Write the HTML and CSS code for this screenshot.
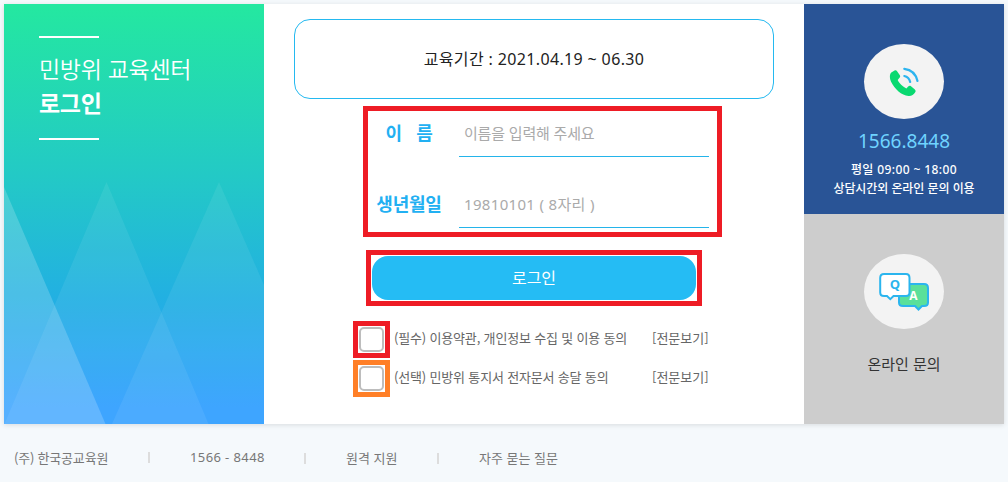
FILE: index.html
```html
<!DOCTYPE html>
<html lang="ko">
<head>
  <meta charset="UTF-8" />
  <meta name="viewport" content="width=device-width, initial-scale=1.0"/>
  <title>민방위 교육센터</title>
  <link rel="stylesheet" href="styles.css">
</head>
<body>

<div class="login-card">

  <!-- Left title -->
  <div class="visual">
    <svg class="peaks" width="260" height="420" viewBox="0 0 260 420">
      <polygon points="0,183 101.5,420 0,420" fill="#fff" fill-opacity="0.19"/>
      <polygon points="102.5,178 204.5,420 0.5,420" fill="#fff" fill-opacity="0.07"/>
      <polygon points="215,178 260,281 260,420 108,420" fill="#fff" fill-opacity="0.07"/>
    </svg>
    <div class="visual-title">
      <p>민방위 교육센터</p>
      <p class="strong">로그인</p>
    </div>
  </div>

  <!-- Login form -->
  <div class="login">
    <div class="period">교육기간 : 2021.04.19 ~ 06.30</div>

    <div class="fields">
      <div class="field">
        <label for="name">이 &nbsp;&nbsp;름</label>
        <input type="text" id="name" placeholder="이름을 입력해 주세요" />
      </div>
      <div class="field">
        <label for="birth">생년월일</label>
        <input class="birth" type="text" id="birth" placeholder="19810101 ( 8자리 )" />
      </div>
    </div>

    <div class="btn-wrap">
      <button class="btn">로그인</button>
    </div>

    <div class="agree">
      <div class="check required"><input type="checkbox" id="agree1" /></div>
      <label for="agree1">(필수) 이용약관, 개인정보 수집 및 이용 동의</label>
      <a>[전문보기]</a>
    </div>
    <div class="agree">
      <div class="check optional"><input type="checkbox" id="agree2" /></div>
      <label for="agree2">(선택) 민방위 통지서 전자문서 송달 동의</label>
      <a>[전문보기]</a>
    </div>
  </div>

  <!-- Contact -->
  <div class="side">
    <div class="call">
      <div class="circle">
        <svg width="80" height="75" viewBox="0 0 80 75">
          <path d="M31 26.3 L27.3 28.6 C25.4 30.4 25.5 34.5 27.2 38 C30.6 45 37.5 51.4 44.5 52 C47.5 52.2 49.5 51 51.4 48 C51.9 47 51.5 46 50.6 45.2 L47 42.2 C46 41.4 45 41.6 44.2 42.6 L42.4 44.4 C39.5 43.4 35 39 33.7 36 L35.7 33.6 C36.4 32.7 36.3 31.8 35.7 30.9 L32.9 27.1 C32.4 26.3 31.7 26 31 26.3Z" fill="#09d970"/>
          <path d="M40.3 24.8 Q51 26 53.5 37 M40.3 32 Q45 33 46.2 38" fill="none" stroke="#2cb4ef" stroke-width="2.2" stroke-linecap="round"/>
        </svg>
      </div>
      <p class="tel">1566.8448</p>
      <p class="hours">평일 09:00 ~ 18:00</p>
      <p class="hours-note">상담시간외 온라인 문의 이용</p>
    </div>
    <div class="online">
      <div class="circle">
        <svg width="80" height="75" viewBox="0 0 80 75">
          <path d="M39 30 H60 Q64 30 64 34 V48.5 Q64 52 60 52 H58 L54.5 55.5 L51 52 H39 Q35 52 35 48.5 V34 Q35 30 39 30Z" fill="#5ae09b" stroke="#2bb5ee" stroke-width="2"/>
          <path d="M20 20 H42 Q45.5 20 45.5 24 V38.5 Q45.5 42 42 42 H29.5 L26.3 45.2 L23 42 H20 Q16.2 42 16.2 38.5 V24 Q16.2 20 20 20Z" fill="#fff" stroke="#2bb5ee" stroke-width="2"/>
          <text class="q" x="31" y="35" text-anchor="middle">Q</text>
          <text class="a" x="49.3" y="46" text-anchor="middle">A</text>
        </svg>
      </div>
      <p class="ask">온라인 문의</p>
    </div>
  </div>
</div>

<!-- Footer -->
<div class="footer">
  <span class="company">(주) 한국공교육원</span>
  <span class="phone">1566 - 8448</span>
  <span class="remote">원격 지원</span>
  <span class="faq">자주 묻는 질문</span>
</div>

</body>
</html>
```

FILE: styles.css
```css
* { margin: 0; padding: 0; box-sizing: border-box; }
body {
  width: 1008px;
  height: 482px;
  padding: 4px;
  overflow: hidden;
  background: #f5f9fc;
  font-family: "Noto Sans CJK KR", sans-serif;
}

.login-card {
  display: flex;
  width: 1000px;
  height: 420px;
  background: #fff;
  box-shadow: 0 1px 5px rgba(0, 0, 0, 0.12);
}

/* left */
.visual {
  position: relative;
  width: 260px;
  padding: 32px 35px;
  background: linear-gradient(#24e8a0 0%, #23cac5 40%, #22b0e2 70%, #309fff 96%);
  color: #fff;
}

.peaks {
  position: absolute;
  top: 0; left: 0;
}

.visual-title {
  position: relative;
  height: 104px;
  padding-top: 15px;
  font-size: 23px;
  font-weight: 350;
  line-height: 34px;
  letter-spacing: -0.3px;
  white-space: nowrap;
}

.visual-title::before, .visual-title::after {
  content: "";
  position: absolute;
  left: 0;
  width: 60px;
  height: 2px;
  background: #fff;
}

.visual-title::before { top: 0; }
.visual-title::after { bottom: 0; }

.visual-title .strong { font-weight: 700; }

/* center */
.login {
  width: 540px;
  padding: 15px 30px;
}

.period {
  display: flex;
  justify-content: center;
  align-items: center;
  height: 80px;
  padding-bottom: 2px;
  border: 1px solid #24b9f0;
  border-radius: 16px;
  font-family: "Noto Sans", "Noto Sans CJK KR", sans-serif;
  font-size: 16px;
  letter-spacing: 0.36px;
  color: #222;
}

.fields {
  width: 359px;
  height: 131px;
  margin: 7px 0 0 69px;
  border: 5px solid #ee1c25;
}

.field {
  display: flex;
  align-items: center;
  height: 46px;
  margin-bottom: 25px;
}

.field label {
  width: 82px;
  margin-right: 9px;
  padding-bottom: 4px;
  text-align: center;
  font-size: 18px;
  font-weight: 700;
  letter-spacing: -0.2px;
  color: #22b0f2;
}

.field input {
  width: 250px;
  height: 46px;
  padding: 0 0 2px 5px;
  border: none;
  border-bottom: 1px solid #24b4ea;
  outline: none;
  background: none;
  font-family: inherit;
  font-size: 15px;
  letter-spacing: -0.2px;
}

.field .birth {
  font-family: "Noto Sans", "Noto Sans CJK KR", sans-serif;
  letter-spacing: 0.33px;
}

.field input::placeholder { color: #aaa; }

.btn-wrap {
  width: 336px;
  height: 56px;
  margin: 13px 0 15px 72px;
  padding: 1px;
  border: 5px solid #ee1c25;
}

.btn {
  display: block;
  width: 324px;
  height: 44px;
  padding-bottom: 3px;
  border: none;
  border-radius: 16px;
  background: #25bcf4;
  color: #fff;
  font-family: inherit;
  font-size: 16px;
  cursor: pointer;
}

.agree {
  display: flex;
  align-items: center;
  height: 37px;
  margin: 0 0 2px 59px;
  font-size: 13px;
  color: #666;
}

.agree label {
  width: 258px;
  margin-left: 4px;
  letter-spacing: -0.17px;
  white-space: nowrap;
}

.agree label, .agree a { padding-bottom: 4px; }

.check {
  width: 37px;
  height: 37px;
  padding: 1px;
  border: 5px solid #ee1c25;
}

.check.optional { border-color: #ff7f27; }

.check input {
  display: block;
  appearance: none;
  width: 25px;
  height: 25px;
  border: 2px solid #bdbdbd;
  border-radius: 5px;
  background: #fff;
}

/* right */
.side {
  width: 200px;
  text-align: center;
}

.call, .online {
  display: flex;
  flex-direction: column;
  align-items: center;
  height: 210px;
  padding-top: 40px;
}

.call {
  background: #295496;
  color: #fff;
}

.online {
  background: #cdcdcd;
  color: #333;
}

.circle {
  width: 80px;
  height: 75px;
  border-radius: 50%;
  background: #f3f3f3;
}

.circle svg { display: block; }

.circle text {
  font-family: "Open Sans", sans-serif;
  font-size: 13px;
  font-weight: 700;
}

.circle .q { fill: #2bb5ee; }
.circle .a { font-size: 12px; fill: #fff; }

.tel {
  margin-top: 8px;
  font-family: "Noto Sans", sans-serif;
  font-size: 19px;
  line-height: 28px;
  color: #6fd3ff;
}

.hours, .hours-note {
  font-size: 12px;
  font-weight: 500;
  line-height: 18px;
}

.hours {
  margin-top: 6px;
  font-family: "Noto Sans", "Noto Sans CJK KR", sans-serif;
  letter-spacing: 0.4px;
}

.hours-note { letter-spacing: -0.1px; }

.ask {
  margin-top: 23px;
  font-size: 15px;
  line-height: 24px;
}

/* footer */
.footer {
  display: flex;
  align-items: center;
  height: 20px;
  margin: 23px 0 0 10px;
  font-size: 13px;
  color: #777;
  white-space: nowrap;
}

.footer span + span::before {
  content: "";
  display: inline-block;
  width: 2px;
  height: 11px;
  margin-right: 40px;
  background: #ddd;
  vertical-align: -1px;
}

.company {
  width: 134px;
  letter-spacing: -0.2px;
}

.phone {
  width: 156px;
  font-family: "Noto Sans", sans-serif;
  letter-spacing: 0.4px;
}

.remote { width: 133px; }
```
